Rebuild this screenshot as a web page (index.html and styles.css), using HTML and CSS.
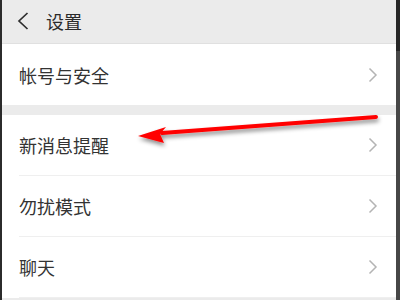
FILE: index.html
```html
<!DOCTYPE html>
<html lang="zh">
<head>
<meta charset="utf-8">
<link rel="stylesheet" href="styles.css">
</head>
<body>
<div class="frame">
  <div class="edge-left"></div>
  <div class="screen">
    <header class="topbar">
      <svg class="back" width="12" height="18" viewBox="0 0 12 18"><path d="M10.5 1 L2 9 L10.5 17" fill="none" stroke="#2e2e2e" stroke-width="1.7"/></svg>
      <span class="title">设置</span>
    </header>
    <section class="group">
      <div class="row"><span class="label">帐号与安全</span><svg class="chev" width="10" height="16" viewBox="0 0 10 16"><path d="M1.5 1.5 L8 8 L1.5 14.5" fill="none" stroke="#b4b4b4" stroke-width="1.5"/></svg></div>
    </section>
    <section class="group gap">
      <div class="row"><span class="label">新消息提醒</span><svg class="chev" width="10" height="16" viewBox="0 0 10 16"><path d="M1.5 1.5 L8 8 L1.5 14.5" fill="none" stroke="#b4b4b4" stroke-width="1.5"/></svg></div>
      <div class="row"><span class="label">勿扰模式</span><svg class="chev" width="10" height="16" viewBox="0 0 10 16"><path d="M1.5 1.5 L8 8 L1.5 14.5" fill="none" stroke="#b4b4b4" stroke-width="1.5"/></svg></div>
      <div class="row"><span class="label">聊天</span><svg class="chev" width="10" height="16" viewBox="0 0 10 16"><path d="M1.5 1.5 L8 8 L1.5 14.5" fill="none" stroke="#b4b4b4" stroke-width="1.5"/></svg></div>
    </section>
    <svg class="arrow" width="394" height="300" viewBox="0 0 394 300">
      <defs>
        <filter id="sh" x="-10%" y="-50%" width="120%" height="200%">
          <feDropShadow dx="1" dy="3" stdDeviation="2" flood-color="#000" flood-opacity="0.45"/>
        </filter>
      </defs>
      <g filter="url(#sh)">
        <path d="M374 117 L160 133" stroke="#ff0000" stroke-width="4" stroke-linecap="round" fill="none"/>
        <path d="M136 136 L164 127 L158 134 L162 143 Z" fill="#ff0000"/>
      </g>
    </svg>
  </div>
  <div class="edge-right"><div class="thumb"></div></div>
</div>
</body>
</html>
```

FILE: styles.css
```css
* { box-sizing: border-box; }
html, body { margin: 0; padding: 0; }
body {
  width: 400px;
  height: 300px;
  overflow: hidden;
  font-family: "Noto Sans CJK SC", "Noto Sans", sans-serif;
  background: #ebebeb;
}
.frame {
  display: flex;
  width: 400px;
  height: 300px;
}
.edge-left {
  width: 2px;
  background: #2b2b2b;
}
.edge-right {
  width: 4px;
  background: #474747;
  display: flex;
  flex-direction: column;
}
.edge-right .thumb {
  height: 51px;
  background: #262626;
}
.screen {
  position: relative;
  flex: 1;
  background: #ebebeb;
  overflow: hidden;
}
.topbar {
  height: 44px;
  display: flex;
  align-items: center;
  padding-left: 15px;
  border-bottom: 1px solid #e0e0e0;
  background: #ebebeb;
}
.back { margin-right: 17px; margin-top: -1px; display: block; }
.title {
  font-size: 18px;
  color: #2a2a2a;
  margin-top: -2px;
}
.group {
  background: #fff;
}
.gap { margin-top: 10px; }
.row {
  height: 61px;
  margin-left: 17px;
  padding-right: 18px;
  display: flex;
  align-items: center;
  justify-content: space-between;
  border-bottom: 1px solid #efefef;
}
.group:first-of-type .row { border-bottom: none; }
.label {
  font-size: 18px;
  color: #333;
}
.chev { display: block; }
.arrow {
  position: absolute;
  left: 0;
  top: 0;
  pointer-events: none;
}
```
